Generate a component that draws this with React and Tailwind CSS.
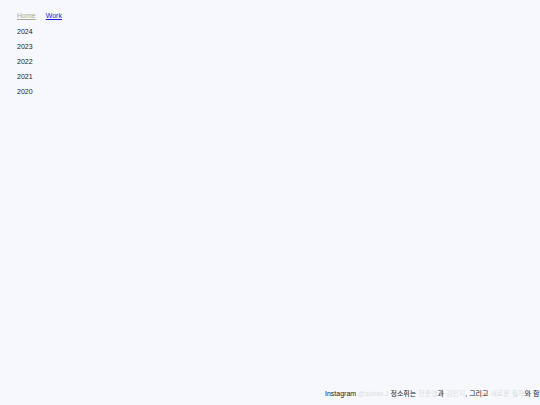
export default function App() {
  const years = ["2024", "2023", "2022", "2021", "2020"];
  return (
    <div
      className="flex h-[405px] w-[540px] flex-col overflow-hidden bg-[#f7f8fd] text-[7px] text-[#222]"
      style={{ fontFamily: '"Liberation Sans", "Noto Sans CJK KR", sans-serif' }}
    >
      <nav className="flex gap-[10px] pl-[17px] pt-[8px] leading-[15px]">
        <a href="#" className="text-[#a9a99a] underline">Home</a>
        <a href="#" className="text-[#1a1ae0] underline">Work</a>
      </nav>
      <ul className="mt-[1px] flex flex-col pl-[17px] leading-[15px]">
        {years.map((y) => (
          <li key={y}>{y}</li>
        ))}
      </ul>
      <footer className="mt-auto whitespace-nowrap pb-[4px] pl-[325px] leading-[15px]">
        <span>Instagram </span>
        <span className="text-[#dcdce0]">@sohwi.J </span>
        <span>정소휘는 </span>
        <span className="text-[#dcdce0]">전준영</span>
        <span>과 </span>
        <span className="text-[#dcdce0]">김민지</span>
        <span>, 그리고 </span>
        <span className="text-[#dcdce0]">새로운 필자</span>
        <span>와 함께 작업합니다.</span>
      </footer>
    </div>
  );
}
